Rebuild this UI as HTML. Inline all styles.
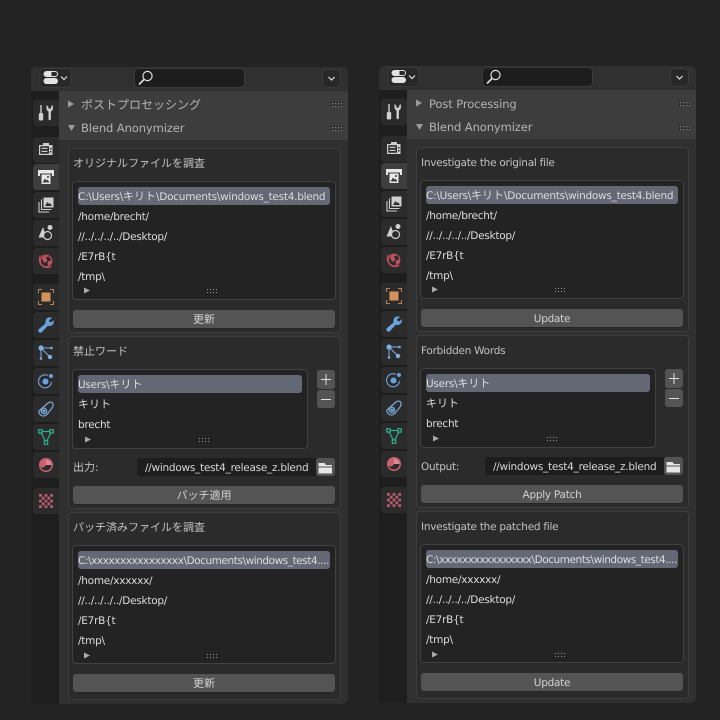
<!DOCTYPE html>
<html><head><meta charset="utf-8">
<style>
html,body{margin:0;padding:0;width:720px;height:720px;overflow:hidden;background:#232323}
body{font-family:"DejaVu Sans","Noto Sans CJK JP",sans-serif;font-size:10.5px;letter-spacing:-.26px;color:#d4d4d4;text-rendering:geometricPrecision}
b{font-weight:normal;font-size:11px;letter-spacing:0}
.p{position:absolute;width:317px;height:637px;left:31px;top:67px;background:#1e1e1e;border-radius:5px 5px 0 0;overflow:hidden;filter:blur(.25px)}
.p.r{left:379px;top:66px}
.p div,.p span{position:absolute;box-sizing:border-box;white-space:nowrap}
.hd{left:0;top:0;width:317px;height:24px;background:#303030}
.main{left:28px;top:24px;width:289px;height:613px;background:#303030;border-radius:0 0 5px 0}
.ph{left:28px;top:24px;width:289px;height:49px;background:#3d3d3d}
.pt{left:50px;font-size:11.5px;letter-spacing:-.1px;color:#b4b4b4;line-height:14px;margin-top:1px}
.pt b{font-size:12px}
.sub{left:37px;width:273px;background:#2b2b2b;border:1px solid #3d3d3d;border-radius:4px}
.tt{left:42px;color:#c2c2c2;line-height:14px;margin-top:1px}
.lb{left:41px;width:264px;background:#232323;border:1px solid #414141;border-radius:4px}
.act{left:47px;width:252px;height:18px;background:#646875;border-radius:3px}
.t{left:47px;line-height:14px;color:#dcdcdc;margin-top:1px}
.x{letter-spacing:-.44px}
.btn{left:42px;width:262px;height:18px;background:#545454;border-radius:3px;text-align:center;line-height:18px;padding-top:1px;color:#d2d2d2;box-shadow:0 1px 0 #242424}
.f{left:106px;width:179px;height:18px;background:#1d1d1d;border-radius:3px 0 0 3px;line-height:18px;padding:1px 0 0 8px;color:#d8d8d8;overflow:hidden}
svg{position:absolute;left:0;top:0;overflow:visible}
</style></head><body>
<svg width="0" height="0" style="position:absolute">
<defs>
<g id="chrome">
<rect x="9" y="1.5" width="31" height="19" rx="4" fill="#282828" stroke="#3a3a3a"/>
<rect x="13" y="4.500" width="13.500" height="5" rx="2.500" fill="none" stroke="#e2e2e2" stroke-width="1"/>
<path d="M15.500 4.500h5v5h-5a2.500 2.500 0 0 1 0-5z" fill="#e2e2e2"/>
<rect x="12.500" y="11" width="14.500" height="6" rx="3" fill="#e2e2e2"/>
<path d="M30 9.500l3 3 3-3" fill="none" stroke="#ddd" stroke-width="1.2"/>
<rect x="103.5" y="1.5" width="110" height="19" rx="4" fill="#1d1d1d" stroke="#3a3a3a"/>
<circle cx="116.500" cy="9" r="4.600" fill="none" stroke="#e0e0e0" stroke-width="1.2"/>
<path d="M113 12.500l-5 5" stroke="#e0e0e0" stroke-width="1.6"/>
<rect x="291.5" y="2.5" width="18" height="18" rx="4" fill="#282828" stroke="#3a3a3a"/>
<path d="M297.500 10l3 3 3-3" fill="none" stroke="#ddd" stroke-width="1.2"/>
</g>
<g id="side">
<g fill="#2b2b2b">
<rect x="2" y="33" width="30" height="26" rx="4"/>
<rect x="2" y="70" width="30" height="26" rx="4"/>
<rect x="2" y="97" width="30" height="26" rx="4" fill="#3e3e3e"/>
<rect x="2" y="125" width="30" height="26" rx="4"/>
<rect x="2" y="153" width="30" height="26" rx="4"/>
<rect x="2" y="181" width="30" height="26" rx="4"/>
<rect x="2" y="217" width="30" height="26" rx="4"/>
<rect x="2" y="245" width="30" height="26" rx="4"/>
<rect x="2" y="273" width="30" height="26" rx="4"/>
<rect x="2" y="301" width="30" height="26" rx="4"/>
<rect x="2" y="329" width="30" height="26" rx="4"/>
<rect x="2" y="357" width="30" height="26" rx="4"/>
<rect x="2" y="385" width="30" height="26" rx="4"/>
<rect x="2" y="421" width="30" height="26" rx="4"/>
</g>
<!-- tool -->
<g transform="translate(7 38)" fill="#cfcfcf">
<rect x="2.300" y="0" width="1.400" height="8"/><rect x="0.800" y="8" width="4.400" height="7.500" rx="1.400"/>
<path d="M8.500 0v3.500c0 1.500 1 2.500 2 3V14a1.200 1.200 0 0 0 2.400 0V6.500c1-.5 2-1.500 2-3V0l-1.800 1.500v2h-2.800v-2z"/>
</g>
<!-- render -->
<g transform="translate(7 74)" fill="#cfcfcf">
<path fill-rule="evenodd" d="M1 4h4V2h6v2h3.500V14H1zM2.200 5.200v7.600h8.800V5.200zM12 7v1.500h1.500V7zM12 10v1.500h1.500V10z"/>
<rect x="3.500" y="6.800" width="6" height="1.200"/><rect x="3.500" y="9.800" width="6" height="1.200"/>
</g>
<!-- output -->
<g transform="translate(7 102)" fill="#e8e8e8">
<path d="M0 1h16v6h-2V4.500H2V7H0z"/>
<path d="M3.500 5.500h9V15h-9z"/>
<path d="M4.500 13.500l2.500-4 1.500 2 1-1 2 3z" fill="#3e3e3e"/><circle cx="10" cy="8" r="1" fill="#3e3e3e"/>
</g>
<!-- view layer -->
<g transform="translate(7 130)" fill="none" stroke="#cfcfcf" stroke-width="1.100">
<rect x="5.500" y="0.500" width="10" height="10" fill="#cfcfcf" stroke="none"/>
<path d="M7 9l2.500-4 1.500 2 1-1 2 3z" fill="#2b2b2b" stroke="none"/>
<path d="M3.500 2.500v10h10M1 5v10h10"/>
</g>
<!-- scene -->
<g transform="translate(7 158)">
<path d="M5 2L0.500 12.500h8z" fill="#cfcfcf"/>
<circle cx="12" cy="2.500" r="2.500" fill="#cfcfcf"/>
<circle cx="9.500" cy="10.500" r="4" fill="#2b2b2b" stroke="#cfcfcf" stroke-width="1.200"/>
</g>
<!-- world -->
<g transform="translate(7 186)">
<circle cx="8" cy="8" r="5.800" fill="#2b2b2b" stroke="#c2515f" stroke-width="1.200"/>
<path d="M2.500 2.500A8 8 0 0 0 13.500 13.500" fill="none" stroke="#c2515f" stroke-width="1"/>
<path d="M4 5l3-2.500 3 .5-2 2 1.500 2.500L7 10 5 8zM10 8.500l3-1 .5 2-2.500 3-1.500-1.500z" fill="#c2515f"/>
</g>
<!-- object -->
<g transform="translate(7 222)">
<rect x="3.500" y="3.500" width="9" height="9" fill="#d4915a"/>
<path d="M0.500 4V0.500H4M12 0.500h3.500V4M15.500 12v3.500H12M4 15.500H0.500V12" fill="none" stroke="#b98455" stroke-width="1"/>
</g>
<!-- modifier -->
<g transform="translate(7 250)">
<path d="M1 15c-1-1-1-2 0-3l6.500-5.500C7 4 8 1 11 .5c1.500-.2 2.500 0 3 .5l-3 2.200.6 1.800 2 .4L15.500 3c.8 2 .2 4-1.500 5.200-1.500 1-3 1-4.200.6L4 15c-1 1-2 1-3 0z" fill="#6aa3de"/>
</g>
<!-- particles -->
<g transform="translate(7 278)" stroke="#7db0e0" fill="#7db0e0" stroke-width="1">
<path d="M3 3h10M3 3v10M3 3l9 9" fill="none"/>
<circle cx="3" cy="3" r="2.600" stroke="none"/>
<circle cx="13.500" cy="3" r="1.300" stroke="none"/>
<circle cx="3" cy="13.500" r="1.300" stroke="none"/>
<circle cx="12" cy="12" r="2.200" stroke="none"/>
</g>
<!-- physics -->
<g transform="translate(7 306)">
<path d="M10 2.500A6.500 6.500 0 1 0 13.500 9" fill="none" stroke="#6d9dd0" stroke-width="1.200"/>
<circle cx="7.500" cy="8.500" r="3" fill="#6aa3de"/>
<circle cx="13" cy="3" r="2" fill="#6aa3de"/>
</g>
<!-- constraints -->
<g transform="translate(7 334)" fill="none" stroke="#7aa7d8" stroke-width="1.200">
<path d="M1.500 9.500L10 2c2-1.500 4.500-1 5 1 .3 1.500 0 2.500-1 4l-5 6.500c-2 2-5 2-6.500.5S0 11 1.500 9.500z"/>
<circle cx="6" cy="10" r="2.800"/><circle cx="6" cy="10" r="1" fill="#7aa7d8"/>
</g>
<!-- mesh data -->
<g transform="translate(7 362)" fill="#2b2b2b" stroke="#2fb08c" stroke-width="1.200">
<path d="M2.500 2.500h11L8 13.500z" fill="none"/>
<rect x="0.700" y="0.700" width="3.400" height="3.400"/>
<rect x="11.900" y="0.700" width="3.400" height="3.400"/>
<rect x="6.300" y="11.900" width="3.400" height="3.400"/>
</g>
<!-- material -->
<g transform="translate(7 390)">
<circle cx="8" cy="8" r="7" fill="#c9606e"/>
<path d="M8 2.500a5.500 5.500 0 0 1 5.500 5.500c0 3-2.500 5.500-5.500 5.500-2.500 0-4.500-1.500-5.300-3.500 2 1 4 .5 5.300-2z" fill="#2b2b2b"/>
<path d="M8 2.500a5.500 5.500 0 0 1 5.500 5.500H8z" fill="#d98a94"/>
</g>
<!-- texture -->
<g transform="translate(7 426)">
<rect x="1" y="1" width="14" height="14" fill="#b65a6e"/>
<path fill="#2b2b2b" d="M3.800 1h2.800v2.800H3.800zM9.400 1h2.800v2.800H9.400zM1 3.800h2.800v2.800H1zM6.600 3.800h2.800v2.800H6.600zM12.200 3.800H15v2.800h-2.800zM3.800 6.600h2.800v2.800H3.800zM9.400 6.600h2.800v2.800H9.400zM1 9.400h2.800v2.800H1zM6.600 9.400h2.800v2.800H6.600zM12.200 9.400H15v2.800h-2.800zM3.800 12.200h2.800V15H3.800zM9.400 12.200h2.800V15H9.400z"/>
</g>
</g>
<g id="grip2"><path fill="#9a9a9a" d="M0 0h1v1H0zM3 0h1v1H3zM6 0h1v1H6zM9 0h1v1H9zM0 3h1v1H0zM3 3h1v1H3zM6 3h1v1H6zM9 3h1v1H9z"/></g>
<g id="grip"><path fill="#111" d="M0 0h1v1H0zM3 0h1v1H3zM6 0h1v1H6zM9 0h1v1H9zM0 3h1v1H0zM3 3h1v1H3zM6 3h1v1H6zM9 3h1v1H9z"/><path fill="#888" d="M1 1h1v1H1zM4 1h1v1H4zM7 1h1v1H7zM10 1h1v1h-1zM1 4h1v1H1zM4 4h1v1H4zM7 4h1v1H7zM10 4h1v1h-1z"/></g>
<g id="overlay">
<path d="M37 33.500l6 3.500-6 3.500zM37 58h7l-3.500 6z" fill="#9c9c9c"/>
<use href="#grip" x="300" y="35"/><use href="#grip" x="300" y="59"/>
<path d="M53 220.500l6 3-6 3zM54 369.500l6 3-6 3zM53 585.500l6 3-6 3z" fill="#aaa"/>
<use href="#grip2" x="176" y="222"/><use href="#grip2" x="168" y="371"/><use href="#grip2" x="176" y="587"/>
<rect x="286" y="303" width="18" height="19" rx="3" fill="#545454"/>
<rect x="286" y="323" width="18" height="18" rx="3" fill="#545454"/>
<path d="M290 312.500h10M295 307v11M290 332.500h10" stroke="#e0e0e0" stroke-width="1" fill="none"/>
<rect x="285" y="391" width="19" height="18" rx="3" fill="#545454"/>
<path d="M287.500 396h6l1.500 2h6v1.500h-13.500zM287.500 400.500H301v6h-13.500z" fill="#e6e6e6"/>
</g>
</defs>
</svg>

<div class="p">
<svg width="317" height="637"><use href="#side"/></svg>
<div class="hd"></div><div class="main"></div><div class="ph"></div>
<svg width="317" height="637"><use href="#chrome"/></svg>
<span class="pt" style="top:30px"><b>ポストプロセッシング</b></span>
<span class="pt" style="top:53px">Blend Anonymizer</span>

<div class="sub" style="top:81px;height:185px"></div>
<span class="tt" style="top:89px"><b>オリジナルファイルを調査</b></span>
<div class="lb" style="top:114px;height:119px"></div>
<div class="act" style="top:120px"></div>
<span class="t" style="top:122px">C:\Users\<b>キリト</b>\Documents\windows_test4.blend</span>
<span class="t" style="top:142px">/home/brecht/</span>
<span class="t" style="top:162px">//../../../../Desktop/</span>
<span class="t" style="top:182px">/E7rB{t</span>
<span class="t" style="top:202px">/tmp\</span>
<div class="btn" style="top:243px"><b>更新</b></div>

<div class="sub" style="top:269px;height:173px"></div>
<span class="tt" style="top:277px"><b>禁止ワード</b></span>
<div class="lb" style="top:302px;height:80px;width:236px"></div>
<div class="act" style="top:308px;width:224px"></div>
<span class="t" style="top:310px">Users\<b>キリト</b></span>
<span class="t" style="top:330px"><b>キリト</b></span>
<span class="t" style="top:350px">brecht</span>
<span class="tt" style="top:393px"><b>出力</b>:</span>
<div class="f" style="top:391px">//windows_test4_release_z.blend</div>
<div class="btn" style="top:419px"><b>パッチ適用</b></div>

<div class="sub" style="top:445px;height:188px"></div>
<span class="tt" style="top:453px"><b>パッチ済みファイルを調査</b></span>
<div class="lb" style="top:478px;height:119px"></div>
<div class="act" style="top:484px"></div>
<span class="t x" style="top:486px">C:\xxxxxxxxxxxxxxxx\Documents\windows_test4....</span>
<span class="t" style="top:506px">/home/xxxxxx/</span>
<span class="t" style="top:526px">//../../../../Desktop/</span>
<span class="t" style="top:546px">/E7rB{t</span>
<span class="t" style="top:566px">/tmp\</span>
<div class="btn" style="top:607px"><b>更新</b></div>
<svg width="317" height="637"><use href="#overlay"/></svg>
</div>

<div class="p r">
<svg width="317" height="637"><use href="#side"/></svg>
<div class="hd"></div><div class="main"></div><div class="ph"></div>
<svg width="317" height="637"><use href="#chrome"/></svg>
<span class="pt" style="top:30px">Post Processing</span>
<span class="pt" style="top:53px">Blend Anonymizer</span>

<div class="sub" style="top:81px;height:185px"></div>
<span class="tt" style="top:89px">Investigate the original file</span>
<div class="lb" style="top:114px;height:119px"></div>
<div class="act" style="top:120px"></div>
<span class="t" style="top:122px">C:\Users\<b>キリト</b>\Documents\windows_test4.blend</span>
<span class="t" style="top:142px">/home/brecht/</span>
<span class="t" style="top:162px">//../../../../Desktop/</span>
<span class="t" style="top:182px">/E7rB{t</span>
<span class="t" style="top:202px">/tmp\</span>
<div class="btn" style="top:243px">Update</div>

<div class="sub" style="top:269px;height:173px"></div>
<span class="tt" style="top:277px">Forbidden Words</span>
<div class="lb" style="top:302px;height:80px;width:236px"></div>
<div class="act" style="top:308px;width:224px"></div>
<span class="t" style="top:310px">Users\<b>キリト</b></span>
<span class="t" style="top:330px"><b>キリト</b></span>
<span class="t" style="top:350px">brecht</span>
<span class="tt" style="top:393px">Output:</span>
<div class="f" style="top:391px">//windows_test4_release_z.blend</div>
<div class="btn" style="top:419px">Apply Patch</div>

<div class="sub" style="top:445px;height:188px"></div>
<span class="tt" style="top:453px">Investigate the patched file</span>
<div class="lb" style="top:478px;height:119px"></div>
<div class="act" style="top:484px"></div>
<span class="t x" style="top:486px">C:\xxxxxxxxxxxxxxxx\Documents\windows_test4....</span>
<span class="t" style="top:506px">/home/xxxxxx/</span>
<span class="t" style="top:526px">//../../../../Desktop/</span>
<span class="t" style="top:546px">/E7rB{t</span>
<span class="t" style="top:566px">/tmp\</span>
<div class="btn" style="top:607px">Update</div>
<svg width="317" height="637"><use href="#overlay"/></svg>
</div>
</body></html>
